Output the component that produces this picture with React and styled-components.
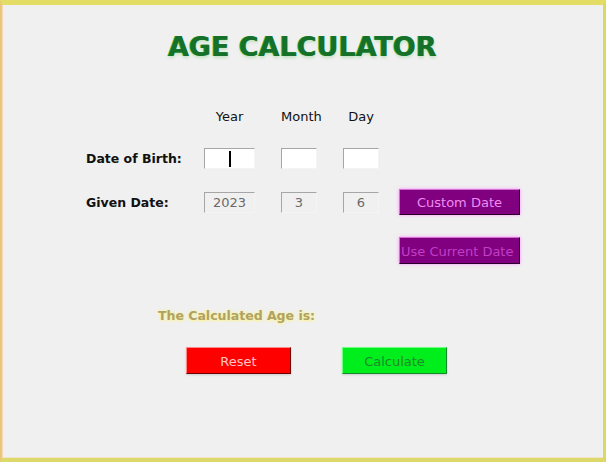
import React from "react";
import styled, { createGlobalStyle } from "styled-components";

const GlobalStyle = createGlobalStyle`
  html, body {
    margin: 0;
    padding: 0;
    background: #f0f0f0;
  }
  body {
    font-family: "DejaVu Sans", Verdana, sans-serif;
  }
`;

const Frame = styled.div`
  box-sizing: border-box;
  width: 606px;
  height: 462px;
  border-style: solid;
  border-width: 5px 3px 4px 2px;
  border-color: #e3dd66 #dcd862 #dcd86a #e8c87a;
  background: #f0f0f0;
  box-shadow: inset 1px 0 0 #f6d8b8, inset 0 -1px 0 #f6e2c8;
  display: flex;
  flex-direction: column;
  font-family: "DejaVu Sans", Verdana, sans-serif;
`;

const Title = styled.h1`
  margin: 26px 0 0;
  text-align: center;
  font-size: 27px;
  line-height: 31px;
  font-weight: bold;
  color: #16702a;
  text-shadow: -1px 0 0 #22a832, 0 2px 3px rgba(110, 200, 110, 0.35);
`;

const Form = styled.div`
  margin-top: 46.5px;
  padding-left: 84px;
  display: flex;
  flex-direction: column;
`;

const Row = styled.div`
  display: flex;
  align-items: center;
  height: ${(p) => p.$h}px;
  margin-top: ${(p) => p.$mt || 0}px;
`;

const Cell = styled.div`
  width: ${(p) => p.$w}px;
  flex: none;
  display: flex;
  align-items: center;
`;

const RowLabel = styled.span`
  font-size: 12.5px;
  font-weight: bold;
  color: #111;
`;

const ColHead = styled.span`
  width: ${(p) => p.$w}px;
  text-align: center;
  font-size: 13px;
  line-height: 16px;
  color: #111;
`;

const Field = styled.div`
  box-sizing: border-box;
  width: ${(p) => p.$w}px;
  height: 21px;
  display: flex;
  align-items: center;
  justify-content: center;
  background: ${(p) => (p.$disabled ? "#f0f0f0" : "#ffffff")};
  border-style: solid;
  border-width: 1px;
  border-color: #a6a6a6 #f4f4f4 #f4f4f4 #a6a6a6;
  font-size: 13px;
  color: #6a6a6a;
`;

const Caret = styled.span`
  display: block;
  width: 2px;
  height: 16px;
  background: #000;
`;

const ToolButton = styled.button`
  box-sizing: border-box;
  width: 121px;
  height: ${(p) => p.$h}px;
  overflow: hidden;
  white-space: nowrap;
  background: #800080;
  color: ${(p) => (p.$dim ? "#c23ec6" : "#f08cf0")};
  border: 1px solid;
  border-color: #d070d0 #2a002a #2a002a #d070d0;
  box-shadow: 0 0 3px rgba(255, 120, 255, 0.8);
  font-family: "DejaVu Sans", Verdana, sans-serif;
  font-size: 13px;
  text-align: ${(p) => (p.$dim ? "left" : "center")};
  padding: 1px 0 0 ${(p) => (p.$dim ? 1 : 0)}px;
`;

const Result = styled.div`
  margin-top: 44px;
  padding-left: 156px;
  font-size: 12.5px;
  line-height: 16px;
  font-weight: bold;
  color: #aea26a;
  text-shadow: 0 0 3px #fff27a, 0 1px 2px #fff4a0;
`;

const Actions = styled.div`
  margin-top: 23px;
  padding-left: 184px;
  display: flex;
  gap: 51px;
`;

const ActionButton = styled.button`
  box-sizing: border-box;
  width: 105px;
  height: 27px;
  padding: 1px 0 0;
  background: ${(p) => p.$bg};
  color: ${(p) => p.$fg};
  border: 1px solid;
  border-color: ${(p) => p.$edge};
  box-shadow: 0 1px 2px rgba(0, 0, 0, 0.15);
  font-family: "DejaVu Sans", Verdana, sans-serif;
  font-size: 13px;
`;

export default function App() {
  return (
    <>
      <GlobalStyle />
      <Frame>
        <Title>AGE CALCULATOR</Title>
        <Form>
          <Row $h={16}>
            <Cell $w={118} />
            <Cell $w={77}>
              <ColHead $w={51}>Year</ColHead>
            </Cell>
            <Cell $w={62}>
              <ColHead $w={36}>Month</ColHead>
            </Cell>
            <Cell $w={56}>
              <ColHead $w={36}>Day</ColHead>
            </Cell>
          </Row>
          <Row $h={21} $mt={23.5}>
            <Cell $w={118}>
              <RowLabel>Date of Birth:</RowLabel>
            </Cell>
            <Cell $w={77}>
              <Field $w={51}>
                <Caret />
              </Field>
            </Cell>
            <Cell $w={62}>
              <Field $w={36} />
            </Cell>
            <Cell $w={56}>
              <Field $w={36} />
            </Cell>
          </Row>
          <Row $h={26} $mt={20}>
            <Cell $w={118}>
              <RowLabel>Given Date:</RowLabel>
            </Cell>
            <Cell $w={77}>
              <Field $w={51} $disabled>2023</Field>
            </Cell>
            <Cell $w={62}>
              <Field $w={36} $disabled>3</Field>
            </Cell>
            <Cell $w={56}>
              <Field $w={36} $disabled>6</Field>
            </Cell>
            <ToolButton $h={26}>Custom Date</ToolButton>
          </Row>
          <Row $h={27} $mt={22}>
            <Cell $w={313} />
            <ToolButton $h={27} $dim>Use Current Date</ToolButton>
          </Row>
        </Form>
        <Result>The Calculated Age is:</Result>
        <Actions>
          <ActionButton $bg="#ff0000" $fg="#ffc4c4" $edge="#ff8a8a #700000 #700000 #ff8a8a">
            Reset
          </ActionButton>
          <ActionButton $bg="#00ee1c" $fg="#1f8a2a" $edge="#70ff80 #148a2a #148a2a #70ff80">
            Calculate
          </ActionButton>
        </Actions>
      </Frame>
    </>
  );
}
